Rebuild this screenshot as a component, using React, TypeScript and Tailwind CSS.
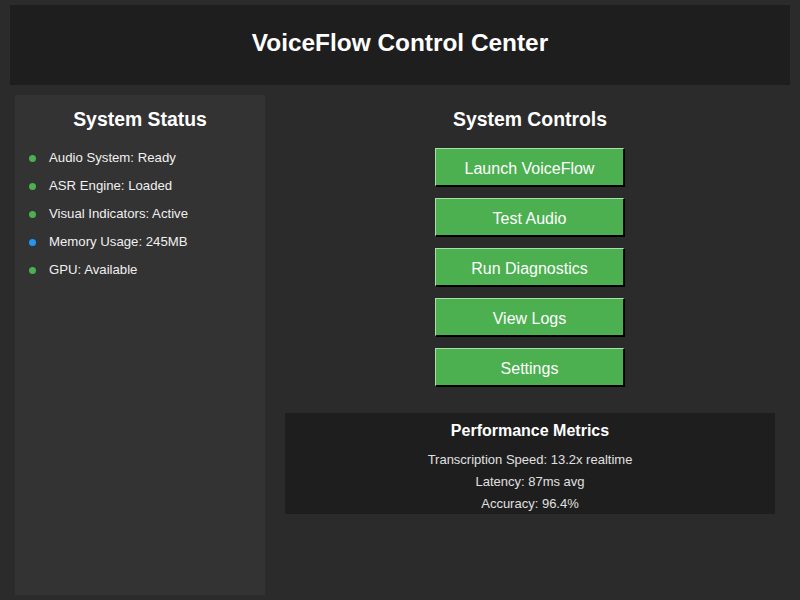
const statusItems = [
  { label: "Audio System: Ready", color: "bg-[#4caf50]" },
  { label: "ASR Engine: Loaded", color: "bg-[#4caf50]" },
  { label: "Visual Indicators: Active", color: "bg-[#4caf50]" },
  { label: "Memory Usage: 245MB", color: "bg-[#2196f3]" },
  { label: "GPU: Available", color: "bg-[#4caf50]" },
];

const controls = ["Launch VoiceFlow", "Test Audio", "Run Diagnostics", "View Logs", "Settings"];

const metrics = ["Transcription Speed: 13.2x realtime", "Latency: 87ms avg", "Accuracy: 96.4%"];

export default function App() {
  return (
    <div className="w-[800px] h-[600px] overflow-hidden bg-[#2b2b2b] text-white font-['Liberation_Sans',Arial,sans-serif]">
      <header className="mx-[10px] mt-[5px] h-[80px] pb-[4px] bg-[#1e1e1e] flex items-center justify-center">
        <h1 className="text-[24.4px] font-bold">VoiceFlow Control Center</h1>
      </header>

      <div className="flex mt-[10px]">
        <aside className="ml-[15px] w-[250px] h-[500px] bg-[#333333]">
          <h2 className="h-[49px] pt-[12px] text-center text-[19.4px] font-bold leading-[24px]">System Status</h2>
          <ul className="pl-[14px]">
            {statusItems.map((item) => (
              <li key={item.label} className="h-[28px] flex items-center text-[13.2px] text-[#f0f0f0]">
                <span className={`w-[7px] h-[7px] rounded-full ${item.color}`} />
                <span className="ml-[13px]">{item.label}</span>
              </li>
            ))}
          </ul>
        </aside>

        <main className="flex-1 px-[20px] pr-[25px] flex flex-col items-center">
          <h2 className="h-[53px] pt-[12px] text-[19.4px] font-bold leading-[24px]">System Controls</h2>
          <div className="flex flex-col gap-[11px]">
            {controls.map((c) => (
              <button
                key={c}
                className="w-[190px] h-[39px] pt-[3px] bg-[#4caf50] text-[16px] text-white border-l border-t border-l-[#a5e0a7] border-t-[#a5e0a7] border-r-2 border-b-2 border-r-black border-b-black"
              >
                {c}
              </button>
            ))}
          </div>
          <section className="mt-[26px] w-full h-[101px] bg-[#1e1e1e] flex flex-col items-center">
            <h3 className="mt-[8px] text-[16px] font-bold leading-[20px]">Performance Metrics</h3>
            <div className="mt-[8px] flex flex-col items-center">
              {metrics.map((m) => (
                <p key={m} className="h-[22px] leading-[22px] text-[13px] text-[#e0e0e0]">
                  {m}
                </p>
              ))}
            </div>
          </section>
        </main>
      </div>
    </div>
  );
}
